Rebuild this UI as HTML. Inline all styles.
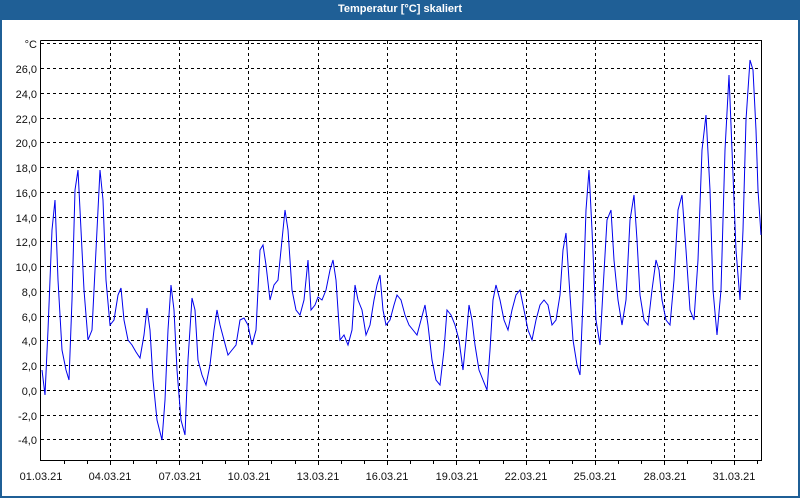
<!DOCTYPE html>
<html><head><meta charset="utf-8"><style>
html,body{margin:0;padding:0;width:800px;height:500px;overflow:hidden;background:#fff}
.win{position:absolute;left:0;top:0;width:796px;height:496px;border:2px solid #1f5f96;border-top:none}
.title{position:absolute;left:0;top:0;width:800px;height:20px;background:#1f5f96;color:#fff;font:bold 11px "Liberation Sans",sans-serif;text-align:center;line-height:19px}
svg{position:absolute;left:0;top:0}
text{font-family:"Liberation Sans",sans-serif;font-size:11px;fill:#111}
</style></head><body>
<div class="win"></div>
<div class="title">Temperatur [°C] skaliert</div>
<svg width="800" height="500">
<g stroke="#000" stroke-width="1" stroke-dasharray="3,3" fill="none" shape-rendering="crispEdges">
<line x1="41" x2="761" y1="43.5" y2="43.5"/>
<line x1="41" x2="761" y1="68.5" y2="68.5"/>
<line x1="41" x2="761" y1="93.5" y2="93.5"/>
<line x1="41" x2="761" y1="118.5" y2="118.5"/>
<line x1="41" x2="761" y1="142.5" y2="142.5"/>
<line x1="41" x2="761" y1="167.5" y2="167.5"/>
<line x1="41" x2="761" y1="192.5" y2="192.5"/>
<line x1="41" x2="761" y1="217.5" y2="217.5"/>
<line x1="41" x2="761" y1="241.5" y2="241.5"/>
<line x1="41" x2="761" y1="266.5" y2="266.5"/>
<line x1="41" x2="761" y1="291.5" y2="291.5"/>
<line x1="41" x2="761" y1="316.5" y2="316.5"/>
<line x1="41" x2="761" y1="340.5" y2="340.5"/>
<line x1="41" x2="761" y1="365.5" y2="365.5"/>
<line x1="41" x2="761" y1="390.5" y2="390.5"/>
<line x1="41" x2="761" y1="415.5" y2="415.5"/>
<line x1="41" x2="761" y1="439.5" y2="439.5"/>
<line y1="41" y2="460" x1="110.5" x2="110.5"/>
<line y1="41" y2="460" x1="179.5" x2="179.5"/>
<line y1="41" y2="460" x1="248.5" x2="248.5"/>
<line y1="41" y2="460" x1="318.5" x2="318.5"/>
<line y1="41" y2="460" x1="387.5" x2="387.5"/>
<line y1="41" y2="460" x1="456.5" x2="456.5"/>
<line y1="41" y2="460" x1="526.5" x2="526.5"/>
<line y1="41" y2="460" x1="595.5" x2="595.5"/>
<line y1="41" y2="460" x1="664.5" x2="664.5"/>
<line y1="41" y2="460" x1="734.5" x2="734.5"/>
</g>
<g stroke="#000" stroke-width="1" fill="none" shape-rendering="crispEdges">
<path d="M40.5 40.5V460.5H761.5V40.5H40.5"/>
<path d="M64.5 460v4M87.5 460v4M110.5 460v5M133.5 460v4M156.5 460v4M179.5 460v5M202.5 460v4M225.5 460v4M248.5 460v5M271.5 460v4M295.5 460v4M318.5 460v5M341.5 460v4M364.5 460v4M387.5 460v5M410.5 460v4M433.5 460v4M456.5 460v5M479.5 460v4M503.5 460v4M526.5 460v5M549.5 460v4M572.5 460v4M595.5 460v5M618.5 460v4M641.5 460v4M664.5 460v5M687.5 460v4M711.5 460v4M734.5 460v5M757.5 460v4"/>
</g>
<polyline fill="none" stroke="#0000ee" stroke-width="1" points="42,370 45,395 48,330 52,230 55,200 58,280 62,350 66,370 69,380 72,300 75,190 78,170 81,230 84,290 88,340 92,330 96,250 100,170 103,200 106,280 110,325 114,320 118,295 121,288 124,320 128,340 132,345 136,352 140,358 144,335 147,308 150,330 153,380 157,420 162,440 165,400 168,330 171,285 174,310 177,370 181,420 185,435 188,360 192,298 195,310 198,360 202,375 206,385 210,365 214,330 217,310 220,325 224,340 228,355 232,350 236,345 240,320 244,318 248,325 252,345 256,330 260,250 263,245 266,265 270,300 274,285 278,280 282,240 285,210 288,230 292,290 296,310 300,315 304,300 308,260 311,310 315,305 318,297 322,300 326,290 330,270 333,260 336,280 340,340 344,335 348,345 352,330 355,285 358,300 362,310 366,335 370,325 374,300 377,285 380,275 383,310 386,325 390,320 394,305 397,295 401,300 405,315 409,325 413,330 417,335 421,320 425,305 428,325 432,360 436,380 440,385 444,350 447,310 451,315 455,325 459,340 463,370 466,340 469,305 472,320 475,345 479,370 483,380 487,390 490,350 493,300 496,285 500,300 504,320 508,330 512,310 516,295 520,290 524,310 528,330 532,340 536,320 540,305 544,300 548,305 552,325 556,320 560,295 563,250 566,233 569,280 573,340 577,365 580,375 583,300 586,210 589,170 592,230 596,320 600,345 603,290 607,220 611,210 614,260 618,300 622,325 626,300 630,220 634,195 637,240 640,295 644,320 648,325 652,290 656,260 659,270 662,300 666,320 670,325 674,280 678,210 682,195 686,250 690,310 694,320 698,260 702,150 706,115 710,190 713,290 717,335 721,290 725,150 729,75 732,150 736,250 740,300 743,230 746,120 750,60 753,70 756,130 758,190 761,235"/>
<g text-anchor="end">
<text x="37" y="48">°C</text>
<text x="37" y="73">26,0</text>
<text x="37" y="98">24,0</text>
<text x="37" y="123">22,0</text>
<text x="37" y="147">20,0</text>
<text x="37" y="172">18,0</text>
<text x="37" y="197">16,0</text>
<text x="37" y="222">14,0</text>
<text x="37" y="246">12,0</text>
<text x="37" y="271">10,0</text>
<text x="37" y="296">8,0</text>
<text x="37" y="321">6,0</text>
<text x="37" y="345">4,0</text>
<text x="37" y="370">2,0</text>
<text x="37" y="395">0,0</text>
<text x="37" y="420">-2,0</text>
<text x="37" y="444">-4,0</text>
</g>
<g text-anchor="middle">
<text x="41" y="480">01.03.21</text>
<text x="110" y="480">04.03.21</text>
<text x="180" y="480">07.03.21</text>
<text x="249" y="480">10.03.21</text>
<text x="318" y="480">13.03.21</text>
<text x="387" y="480">16.03.21</text>
<text x="457" y="480">19.03.21</text>
<text x="526" y="480">22.03.21</text>
<text x="595" y="480">25.03.21</text>
<text x="665" y="480">28.03.21</text>
<text x="734" y="480">31.03.21</text>
</g>
</svg>
</body></html>
